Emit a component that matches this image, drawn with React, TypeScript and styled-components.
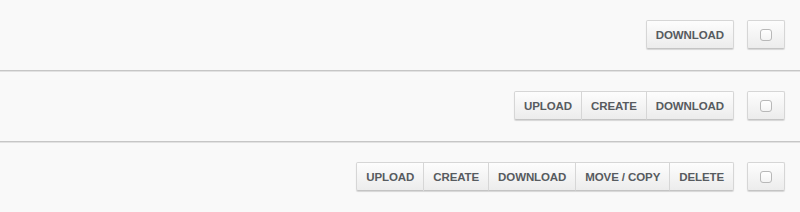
import React from "react";
import styled, { createGlobalStyle } from "styled-components";

const Global = createGlobalStyle`
  html, body { margin: 0; padding: 0; background: #f9f9f9; }
  body { font-family: "Liberation Sans", Arial, sans-serif; }
`;

const Page = styled.div`
  width: 800px;
  background: #f9f9f9;
`;

const Row = styled.div<{ $last?: boolean }>`
  display: flex;
  justify-content: flex-end;
  align-items: center;
  gap: 13px;
  padding: 20px 15px 21px;
  border-bottom: ${(p) => (p.$last ? "none" : "1px solid #c6c6c6")};
  box-shadow: ${(p) => (p.$last ? "none" : "0 1px 0 #e2e2e2")};
`;

const Group = styled.div`
  display: flex;
  border-radius: 2px;
  box-shadow: 0 1px 1px rgba(0, 0, 0, 0.14);
`;

const Btn = styled.button`
  height: 29px;
  box-sizing: border-box;
  margin: 0;
  padding: 0 9px;
  font-family: "Liberation Sans", Arial, sans-serif;
  font-weight: bold;
  font-size: 11.5px;
  letter-spacing: -0.1px;
  color: #575b5f;
  background: linear-gradient(#fdfdfd, #ececec);
  border: 1px solid #d6d6d6;
  border-bottom-color: #c4c4c4;
  border-left-width: 0;
  cursor: pointer;
  &:first-child {
    border-left-width: 1px;
    border-radius: 2px 0 0 2px;
  }
  &:last-child {
    border-radius: 0 2px 2px 0;
  }
  &:only-child {
    border-radius: 2px;
  }
`;

const CheckBtn = styled.button`
  width: 38px;
  height: 29px;
  box-sizing: border-box;
  margin: 0;
  padding: 0;
  display: flex;
  align-items: center;
  justify-content: center;
  background: linear-gradient(#fdfdfd, #ececec);
  border: 1px solid #d6d6d6;
  border-bottom-color: #c4c4c4;
  border-radius: 2px;
  box-shadow: 0 1px 1px rgba(0, 0, 0, 0.14);
`;

const Box = styled.span`
  display: block;
  width: 12px;
  height: 12px;
  box-sizing: border-box;
  border: 1px solid #b8b8b8;
  border-radius: 3px;
  background: linear-gradient(#ffffff, #f4f4f4);
`;

const rows: string[][] = [
  ["DOWNLOAD"],
  ["UPLOAD", "CREATE", "DOWNLOAD"],
  ["UPLOAD", "CREATE", "DOWNLOAD", "MOVE / COPY", "DELETE"],
];

export default function App() {
  return (
    <Page>
      <Global />
      {rows.map((labels, i) => (
        <Row key={i} $last={i === rows.length - 1}>
          <Group>
            {labels.map((l) => (
              <Btn key={l}>{l}</Btn>
            ))}
          </Group>
          <CheckBtn>
            <Box />
          </CheckBtn>
        </Row>
      ))}
    </Page>
  );
}
